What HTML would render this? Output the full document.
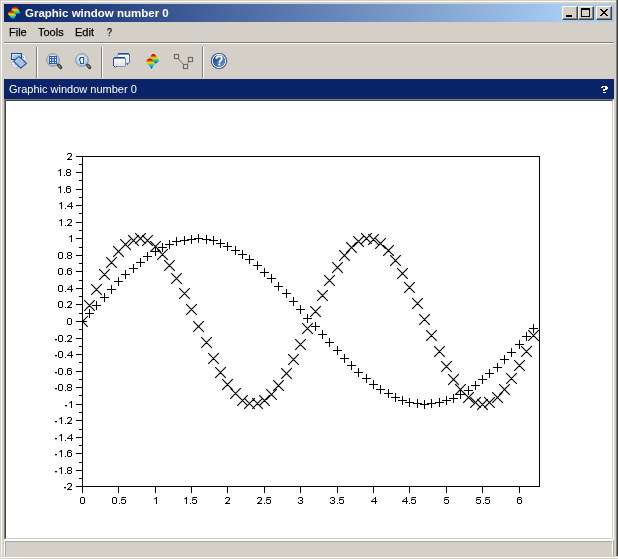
<!DOCTYPE html>
<html><head><meta charset="utf-8">
<style>
html,body{margin:0;padding:0;}
body{width:618px;height:559px;overflow:hidden;background:#d4d0c8;position:relative;font-family:"Liberation Sans",sans-serif;}
.a{position:absolute;}
.t{position:absolute;white-space:nowrap;font-size:11px;line-height:13px;color:#000;will-change:transform;}
.m{-webkit-text-stroke:0.25px #000;}
</style></head><body>
<!-- window frame -->
<div class="a" style="left:1px;top:1px;width:615px;height:1px;background:#fff"></div>
<div class="a" style="left:1px;top:1px;width:1px;height:555px;background:#fff"></div>
<div class="a" style="left:616px;top:0;width:1px;height:556px;background:#808080"></div>
<div class="a" style="left:617px;top:0;width:1px;height:556px;background:#404040"></div>
<div class="a" style="left:0;top:557px;width:618px;height:1px;background:#fff"></div>

<!-- title bar -->
<div class="a" style="left:4px;top:4px;width:610px;height:18px;background:linear-gradient(to right,#0a246a 0px,#a6caf0 556px)"></div>
<div class="t" style="left:25px;top:7px;font-weight:bold;color:#fff;font-size:11.5px">Graphic window number 0</div>

<!-- caption buttons -->
<div class="a" style="left:562px;top:6px;width:16px;height:14px;box-sizing:border-box;background:#d4d0c8;border-top:1px solid #fff;border-left:1px solid #fff;border-right:1px solid #404040;border-bottom:1px solid #404040;box-shadow:inset -1px -1px 0 #808080"></div>
<div class="a" style="left:566px;top:15px;width:6px;height:2px;background:#000"></div>
<div class="a" style="left:578px;top:6px;width:16px;height:14px;box-sizing:border-box;background:#d4d0c8;border-top:1px solid #fff;border-left:1px solid #fff;border-right:1px solid #404040;border-bottom:1px solid #404040;box-shadow:inset -1px -1px 0 #808080"></div>
<div class="a" style="left:581px;top:8px;width:9px;height:9px;box-sizing:border-box;border:1px solid #000;border-top-width:2px"></div>
<div class="a" style="left:596px;top:6px;width:16px;height:14px;box-sizing:border-box;background:#d4d0c8;border-top:1px solid #fff;border-left:1px solid #fff;border-right:1px solid #404040;border-bottom:1px solid #404040;box-shadow:inset -1px -1px 0 #808080"></div>
<svg class="a" style="left:0;top:0" width="618" height="24" shape-rendering="crispEdges"><path d="M600 9h1v1h-1zM601 9h1v1h-1zM606 9h1v1h-1zM607 9h1v1h-1zM601 10h1v1h-1zM602 10h1v1h-1zM605 10h1v1h-1zM606 10h1v1h-1zM602 11h1v1h-1zM603 11h1v1h-1zM604 11h1v1h-1zM605 11h1v1h-1zM603 12h1v1h-1zM604 12h1v1h-1zM602 13h1v1h-1zM603 13h1v1h-1zM604 13h1v1h-1zM605 13h1v1h-1zM601 14h1v1h-1zM602 14h1v1h-1zM605 14h1v1h-1zM606 14h1v1h-1zM600 15h1v1h-1zM601 15h1v1h-1zM606 15h1v1h-1zM607 15h1v1h-1z" fill="#000"/></svg>

<!-- menu bar -->
<div class="t" style="left:9px;top:26px" ><span class="m">File</span></div>
<div class="t" style="left:38px;top:26px" ><span class="m">Tools</span></div>
<div class="t" style="left:75px;top:26px" ><span class="m">Edit</span></div>
<div class="t" style="left:107px;top:26px;transform:scaleX(0.8);transform-origin:0 0"><span class="m">?</span></div>
<div class="a" style="left:4px;top:42px;width:610px;height:1px;background:#808080"></div>
<div class="a" style="left:4px;top:43px;width:610px;height:1px;background:#fff"></div>

<!-- toolbar separators -->
<div class="a" style="left:36px;top:47px;width:1px;height:31px;background:#808080"></div>
<div class="a" style="left:37px;top:47px;width:1px;height:31px;background:#fff"></div>
<div class="a" style="left:101px;top:47px;width:1px;height:31px;background:#808080"></div>
<div class="a" style="left:102px;top:47px;width:1px;height:31px;background:#fff"></div>
<div class="a" style="left:202px;top:47px;width:1px;height:31px;background:#808080"></div>
<div class="a" style="left:203px;top:47px;width:1px;height:31px;background:#fff"></div>


<!-- toolbar icons -->
<svg class="a" style="left:0;top:0" width="240" height="80" viewBox="0 0 240 80">
<defs>
<linearGradient id="lb" x1="0" y1="0" x2="1" y2="1"><stop offset="0" stop-color="#c4d8f2"/><stop offset="1" stop-color="#7ea4d8"/></linearGradient>
<linearGradient id="rb" x1="0" y1="0" x2="0" y2="1"><stop offset="0" stop-color="#a00000"/><stop offset="0.14" stop-color="#e01800"/><stop offset="0.28" stop-color="#ff7000"/><stop offset="0.4" stop-color="#f0e000"/><stop offset="0.52" stop-color="#80e030"/><stop offset="0.63" stop-color="#20d080"/><stop offset="0.74" stop-color="#00c0e0"/><stop offset="0.86" stop-color="#0058f0"/><stop offset="1" stop-color="#0000a0"/></linearGradient>
<radialGradient id="mg" cx="0.4" cy="0.35" r="0.7"><stop offset="0" stop-color="#e4f0fc"/><stop offset="1" stop-color="#98c0ec"/></radialGradient>
<linearGradient id="hb" x1="0" y1="0" x2="1" y2="1"><stop offset="0" stop-color="#0e3a8a"/><stop offset="1" stop-color="#6c9ad0"/></linearGradient>
<linearGradient id="bw" x1="0" y1="0" x2="0" y2="1"><stop offset="0" stop-color="#ffffff"/><stop offset="1" stop-color="#e2e2e6"/></linearGradient>
</defs>
<!-- rotate icon -->
<path d="M22 54.6c2.6 0 3.6 1.4 3.6 3.2h1.2l-2.2 2.6l-2.2-2.6h1.2c0-.9-.6-1.3-1.6-1.3z" fill="#ffffff" stroke="#9eb0c8" stroke-width=".8" stroke-linejoin="round"/>
<path d="M17.5 67.6c-3.2 0-5-1.2-5-3.4h-1.4l2.2-2.6l2.2 2.6h-1.2c0 .9.9 1.5 3.2 1.5z" fill="#ffffff" stroke="#9eb0c8" stroke-width=".8" stroke-linejoin="round"/>
<rect x="11.5" y="53.5" width="10" height="6" fill="url(#lb)" stroke="#1c4a9a" stroke-width="1"/><path d="M12.5 58.5V54.5H20" fill="none" stroke="#e8f0fa" stroke-width=".8"/>
<path d="M13.7 61.4L18.8 56.7L26.5 63.4L20.8 68.1Z" fill="#a8c2e8" stroke="#1c4a9a" stroke-width="1.05" stroke-linejoin="round"/><path d="M15 61.4L18.8 57.9L23 61.6" fill="none" stroke="#e4eefa" stroke-width=".7"/>
<!-- magnifier grid -->
<circle cx="53" cy="60" r="6.3" fill="url(#mg)" stroke="#8c8c8c" stroke-width="1"/>
<path d="M58.6 65.2L60.6 67.4" stroke="#3c3c3c" stroke-width="3.4" stroke-linecap="round"/><path d="M58.8 65.5L60.3 67.1" stroke="#8a8a8a" stroke-width="1.2" stroke-linecap="round"/>
<rect x="49" y="56" width="8" height="8" fill="#2c5ca8"/>
<path d="M50 57h1v1h-1zM52 57h2v1h-2zM55 57h1v1h-1zM50 59h1v2h-1zM55 59h1v2h-1zM50 62h1v1h-1zM52 62h2v1h-2zM55 62h1v1h-1z" fill="#fff"/>
<rect x="52" y="59" width="2" height="2" fill="#9cc0ec"/>
<!-- magnifier 1 -->
<circle cx="82" cy="60" r="6.3" fill="url(#mg)" stroke="#8c8c8c" stroke-width="1"/>
<path d="M87.6 65.2L89.6 67.4" stroke="#3c3c3c" stroke-width="3.4" stroke-linecap="round"/><path d="M87.8 65.5L89.3 67.1" stroke="#8a8a8a" stroke-width="1.2" stroke-linecap="round"/>
<path d="M80 57H84V64H80V61H79V58H80Z" fill="#2c5ca8"/>
<path d="M81 58H83V63H81V60.5H80V59.2H81Z" fill="#fff"/>
<!-- speech bubbles -->
<g shape-rendering="crispEdges">
<rect x="118" y="54" width="11" height="9" fill="url(#bw)"/>
<rect x="118" y="53" width="11" height="1" fill="#1c4c9c"/><rect x="118" y="54" width="11" height="1" fill="#6a8cc8"/>
<rect x="117" y="54" width="1" height="9" fill="#9aaed2"/>
<rect x="129" y="54" width="1" height="9" fill="#4a72b4"/>
<rect x="126" y="63" width="3" height="1" fill="#6a8cc4"/>
<rect x="127" y="63" width="1" height="2" fill="#3a64ac"/>
<rect x="114" y="58" width="11" height="8" fill="url(#bw)"/>
<rect x="114" y="57" width="11" height="1" fill="#1c4c9c"/><rect x="114" y="58" width="11" height="1" fill="#6a8cc8"/>
<rect x="113" y="58" width="1" height="8" fill="#1c4c9c"/>
<rect x="125" y="58" width="1" height="8" fill="#7090c4"/>
<rect x="117" y="66" width="8" height="1" fill="#7c98c8"/>
<rect x="114" y="66" width="1" height="1" fill="#1c4c9c"/>
<rect x="116" y="66" width="1" height="1" fill="#1c4c9c"/>
<rect x="115" y="67" width="1" height="1" fill="#5a7cbc"/>
</g>
<!-- scilab toolbar icon -->
<use href="#sci" transform="translate(137.7 47.4) scale(1.065)"/>
<!-- polyline icon -->
<path d="M178.5 59L183.5 64.5M187.5 63.5L189 61.5" stroke="#707070" stroke-width="1"/>
<rect x="174.5" y="54.5" width="4" height="4" fill="#e0dcd4" stroke="#6c6c6c" stroke-width="1.2"/>
<rect x="183.5" y="64.5" width="4" height="4" fill="#e0dcd4" stroke="#6c6c6c" stroke-width="1.2"/>
<rect x="188.5" y="57.5" width="4" height="4" fill="#e0dcd4" stroke="#6c6c6c" stroke-width="1.2"/>
<!-- help icon -->
<circle cx="219" cy="61" r="8.1" fill="#1a4a98"/>
<circle cx="219" cy="61" r="6.6" fill="none" stroke="#fff" stroke-width="1.1"/>
<circle cx="219" cy="61" r="5.9" fill="url(#hb)"/>
<path d="M216.4 58.9c0-1.8 1.2-2.7 2.7-2.7c1.7 0 2.7 1.1 2.7 2.4c0 1.9-2.3 2.1-2.3 3.8v.4" fill="none" stroke="#fff" stroke-width="2"/>
<rect x="218.3" y="63.5" width="2.1" height="2" fill="#fff"/>
</svg>
<!-- title bar icon -->
<svg class="a" style="left:0;top:0" width="30" height="24" viewBox="0 0 30 24">
<g id="sci">
<path d="M11.4 10.6C11.8 8 13.2 6.3 14.8 6.3C16.3 6.3 17.5 8 20.3 12.8L16.8 15.2C14.8 13.8 13 12.2 11.4 10.6Z" fill="url(#rb)"/>
<path d="M7.9 13.8C8.3 11.6 9.8 10.5 11.2 10.5C12.8 10.5 14 11.6 16.1 15.3L13.1 20C11 17.8 9 15.5 7.9 13.8Z" fill="url(#rb)"/>
</g>
</svg>

<!-- header bar -->
<div class="a" style="left:4px;top:79px;width:610px;height:20px;background:#0a246a"></div>
<div class="t" style="left:9px;top:83px;color:#fff">Graphic window number 0</div>
<svg class="a" style="left:0;top:0" width="618" height="100" shape-rendering="crispEdges"><path d="M602 86h5v1h-5zM601 87h2v1h-2zM605 87h3v2h-3zM603 89h4v1h-4zM603 90h2v1h-2zM603 92h3v1h-3z" fill="#fff"/></svg>

<!-- canvas sunken border -->
<div class="a" style="left:4px;top:99px;width:610px;height:441px;box-sizing:border-box;border-top:1px solid #808080;border-left:1px solid #808080;border-right:1px solid #fff;border-bottom:1px solid #fff;"></div>
<div class="a" style="left:5px;top:100px;width:608px;height:439px;box-sizing:border-box;background:#fff;border-top:1px solid #404040;border-left:1px solid #404040;border-right:1px solid #d4d0c8;border-bottom:1px solid #d4d0c8;"></div>

<!-- status bar -->
<div class="a" style="left:4px;top:540px;width:610px;height:1px;background:#fff"></div>
<div class="a" style="left:4px;top:539px;width:1px;height:17px;background:#fff"></div>
<div class="a" style="left:5px;top:541px;width:607px;height:1px;background:#a8a8a8"></div>
<div class="a" style="left:5px;top:541px;width:1px;height:15px;background:#a8a8a8"></div>
<div class="a" style="left:612px;top:541px;width:1px;height:15px;background:#fff"></div>
<div class="a" style="left:613px;top:540px;width:1px;height:16px;background:#a8a8a8"></div>

<svg class="a" style="left:0;top:0;will-change:transform" width="618" height="559" shape-rendering="crispEdges">
<path d="M82.5 156.5H539.5V486.5H82.5Z" fill="none" stroke="#000" stroke-width="1"/>
<path d="M76 486.5H82 M79 478.5H82 M76 470.5H82 M79 462.5H82 M76 453.5H82 M79 445.5H82 M76 437.5H82 M79 429.5H82 M76 420.5H82 M79 412.5H82 M76 404.5H82 M79 395.5H82 M76 387.5H82 M79 379.5H82 M76 371.5H82 M79 362.5H82 M76 354.5H82 M79 346.5H82 M76 338.5H82 M79 329.5H82 M76 321.5H82 M79 313.5H82 M76 304.5H82 M79 296.5H82 M76 288.5H82 M79 280.5H82 M76 271.5H82 M79 263.5H82 M76 255.5H82 M79 247.5H82 M76 238.5H82 M79 230.5H82 M76 222.5H82 M79 213.5H82 M76 205.5H82 M79 197.5H82 M76 189.5H82 M79 180.5H82 M76 172.5H82 M79 164.5H82 M76 156.5H82 M82.5 487V493 M118.5 487V493 M155.5 487V493 M191.5 487V493 M227.5 487V493 M264.5 487V493 M300.5 487V493 M337.5 487V493 M373.5 487V493 M409.5 487V493 M446.5 487V493 M482.5 487V493 M519.5 487V493" stroke="#000" stroke-width="1"/>
<g fill="#000" shape-rendering="crispEdges"><path d="M67 483h1v1h-1zM60 467h1v1h-1zM59 469h1v1h-1zM67 467h1v1h-1zM71 467h1v1h-1zM67 470h1v1h-1zM71 470h1v1h-1zM67 473h1v1h-1zM71 473h1v1h-1zM60 450h1v1h-1zM59 452h1v1h-1zM67 450h1v1h-1zM71 450h1v1h-1zM68 451h1v1h-1zM71 452h1v1h-1zM67 456h1v1h-1zM71 456h1v1h-1zM60 434h1v1h-1zM59 436h1v1h-1zM69 435h1v1h-1zM68 436h1v1h-1zM67 437h1v1h-1zM60 417h1v1h-1zM59 419h1v1h-1zM67 417h1v1h-1zM70 401h1v1h-1zM69 403h1v1h-1zM58 384h1v1h-1zM62 384h1v1h-1zM58 390h1v1h-1zM62 390h1v1h-1zM67 384h1v1h-1zM71 384h1v1h-1zM67 387h1v1h-1zM71 387h1v1h-1zM67 390h1v1h-1zM71 390h1v1h-1zM58 368h1v1h-1zM62 368h1v1h-1zM58 374h1v1h-1zM62 374h1v1h-1zM67 368h1v1h-1zM71 368h1v1h-1zM68 369h1v1h-1zM71 370h1v1h-1zM67 374h1v1h-1zM71 374h1v1h-1zM58 351h1v1h-1zM62 351h1v1h-1zM58 357h1v1h-1zM62 357h1v1h-1zM69 352h1v1h-1zM68 353h1v1h-1zM67 354h1v1h-1zM58 335h1v1h-1zM62 335h1v1h-1zM58 341h1v1h-1zM62 341h1v1h-1zM67 335h1v1h-1zM67 318h1v1h-1zM71 318h1v1h-1zM67 324h1v1h-1zM71 324h1v1h-1zM58 301h1v1h-1zM62 301h1v1h-1zM58 307h1v1h-1zM62 307h1v1h-1zM67 301h1v1h-1zM58 285h1v1h-1zM62 285h1v1h-1zM58 291h1v1h-1zM62 291h1v1h-1zM69 286h1v1h-1zM68 287h1v1h-1zM67 288h1v1h-1zM58 268h1v1h-1zM62 268h1v1h-1zM58 274h1v1h-1zM62 274h1v1h-1zM67 268h1v1h-1zM71 268h1v1h-1zM68 269h1v1h-1zM71 270h1v1h-1zM67 274h1v1h-1zM71 274h1v1h-1zM58 252h1v1h-1zM62 252h1v1h-1zM58 258h1v1h-1zM62 258h1v1h-1zM67 252h1v1h-1zM71 252h1v1h-1zM67 255h1v1h-1zM71 255h1v1h-1zM67 258h1v1h-1zM71 258h1v1h-1zM70 235h1v1h-1zM69 237h1v1h-1zM60 219h1v1h-1zM59 221h1v1h-1zM67 219h1v1h-1zM60 202h1v1h-1zM59 204h1v1h-1zM69 203h1v1h-1zM68 204h1v1h-1zM67 205h1v1h-1zM59 186h1v1h-1zM58 188h1v1h-1zM66 186h1v1h-1zM70 186h1v1h-1zM67 187h1v1h-1zM70 188h1v1h-1zM66 192h1v1h-1zM70 192h1v1h-1zM59 169h1v1h-1zM58 171h1v1h-1zM66 169h1v1h-1zM70 169h1v1h-1zM66 172h1v1h-1zM70 172h1v1h-1zM66 175h1v1h-1zM70 175h1v1h-1zM67 153h1v1h-1zM80 497h1v1h-1zM84 497h1v1h-1zM80 503h1v1h-1zM84 503h1v1h-1zM112 497h1v1h-1zM116 497h1v1h-1zM112 503h1v1h-1zM116 503h1v1h-1zM122 498h1v1h-1zM125 499h1v1h-1zM121 503h1v1h-1zM125 503h1v1h-1zM155 497h1v1h-1zM154 499h1v1h-1zM185 497h1v1h-1zM184 499h1v1h-1zM193 498h1v1h-1zM196 499h1v1h-1zM192 503h1v1h-1zM196 503h1v1h-1zM225 497h1v1h-1zM257 497h1v1h-1zM267 498h1v1h-1zM270 499h1v1h-1zM266 503h1v1h-1zM270 503h1v1h-1zM298 497h1v1h-1zM302 497h1v1h-1zM298 503h1v1h-1zM302 503h1v1h-1zM330 497h1v1h-1zM334 497h1v1h-1zM330 503h1v1h-1zM334 503h1v1h-1zM340 498h1v1h-1zM343 499h1v1h-1zM339 503h1v1h-1zM343 503h1v1h-1zM373 498h1v1h-1zM372 499h1v1h-1zM371 500h1v1h-1zM404 498h1v1h-1zM403 499h1v1h-1zM402 500h1v1h-1zM412 498h1v1h-1zM415 499h1v1h-1zM411 503h1v1h-1zM415 503h1v1h-1zM445 498h1v1h-1zM448 499h1v1h-1zM444 503h1v1h-1zM448 503h1v1h-1zM477 498h1v1h-1zM480 499h1v1h-1zM476 503h1v1h-1zM480 503h1v1h-1zM486 498h1v1h-1zM489 499h1v1h-1zM485 503h1v1h-1zM489 503h1v1h-1zM517 497h1v1h-1zM521 497h1v1h-1zM518 498h1v1h-1zM521 499h1v1h-1zM517 503h1v1h-1zM521 503h1v1h-1z" fill-opacity=".22"/><path d="M64 488h1v1h-1zM65 488h1v1h-1zM71 483h1v1h-1zM70 485h1v1h-1zM71 486h1v1h-1zM70 487h1v1h-1zM55 472h1v1h-1zM56 472h1v1h-1zM55 455h1v1h-1zM56 455h1v1h-1zM55 439h1v1h-1zM56 439h1v1h-1zM55 422h1v1h-1zM56 422h1v1h-1zM71 417h1v1h-1zM70 419h1v1h-1zM71 420h1v1h-1zM70 421h1v1h-1zM65 406h1v1h-1zM66 406h1v1h-1zM55 389h1v1h-1zM56 389h1v1h-1zM55 373h1v1h-1zM56 373h1v1h-1zM55 356h1v1h-1zM56 356h1v1h-1zM55 340h1v1h-1zM56 340h1v1h-1zM71 335h1v1h-1zM70 337h1v1h-1zM71 338h1v1h-1zM70 339h1v1h-1zM71 301h1v1h-1zM70 303h1v1h-1zM71 304h1v1h-1zM70 305h1v1h-1zM71 219h1v1h-1zM70 221h1v1h-1zM71 222h1v1h-1zM70 223h1v1h-1zM71 153h1v1h-1zM70 155h1v1h-1zM71 156h1v1h-1zM70 157h1v1h-1zM229 497h1v1h-1zM228 499h1v1h-1zM229 500h1v1h-1zM228 501h1v1h-1zM261 497h1v1h-1zM260 499h1v1h-1zM261 500h1v1h-1zM260 501h1v1h-1zM302 500h1v1h-1zM334 500h1v1h-1z" fill-opacity=".33"/><path d="M69 488h1v1h-1zM69 422h1v1h-1zM69 340h1v1h-1zM69 306h1v1h-1zM69 224h1v1h-1zM69 158h1v1h-1zM121 497h1v1h-1zM192 497h1v1h-1zM227 502h1v1h-1zM259 502h1v1h-1zM266 497h1v1h-1zM339 497h1v1h-1zM411 497h1v1h-1zM444 497h1v1h-1zM476 497h1v1h-1zM485 497h1v1h-1z" fill-opacity=".44"/><path d="M59 468h1v1h-1zM59 451h1v1h-1zM68 452h1v1h-1zM59 435h1v1h-1zM59 418h1v1h-1zM69 402h1v1h-1zM68 370h1v1h-1zM68 270h1v1h-1zM69 236h1v1h-1zM59 220h1v1h-1zM59 203h1v1h-1zM58 187h1v1h-1zM67 188h1v1h-1zM58 170h1v1h-1zM121 498h1v1h-1zM154 498h1v1h-1zM184 498h1v1h-1zM192 498h1v1h-1zM266 498h1v1h-1zM339 498h1v1h-1zM411 498h1v1h-1zM444 498h1v1h-1zM476 498h1v1h-1zM485 498h1v1h-1zM518 499h1v1h-1z" fill-opacity=".55"/><path d="M70 435h1v1h-1zM69 436h1v1h-1zM68 437h1v1h-1zM70 352h1v1h-1zM69 353h1v1h-1zM68 354h1v1h-1zM70 286h1v1h-1zM69 287h1v1h-1zM68 288h1v1h-1zM70 203h1v1h-1zM69 204h1v1h-1zM68 205h1v1h-1zM121 499h1v1h-1zM192 499h1v1h-1zM266 499h1v1h-1zM339 499h1v1h-1zM374 498h1v1h-1zM373 499h1v1h-1zM372 500h1v1h-1zM405 498h1v1h-1zM404 499h1v1h-1zM403 500h1v1h-1zM411 499h1v1h-1zM444 499h1v1h-1zM476 499h1v1h-1zM485 499h1v1h-1z" fill-opacity=".66"/><path d="M70 486h1v1h-1zM69 487h1v1h-1zM70 420h1v1h-1zM69 421h1v1h-1zM70 338h1v1h-1zM69 339h1v1h-1zM70 304h1v1h-1zM69 305h1v1h-1zM70 222h1v1h-1zM69 223h1v1h-1zM70 156h1v1h-1zM69 157h1v1h-1zM228 500h1v1h-1zM227 501h1v1h-1zM260 500h1v1h-1zM259 501h1v1h-1z" fill-opacity=".77"/><path d="M60 468h1v1h-1zM60 451h1v1h-1zM71 451h1v1h-1zM60 435h1v1h-1zM60 418h1v1h-1zM70 402h1v1h-1zM71 369h1v1h-1zM71 269h1v1h-1zM70 236h1v1h-1zM60 220h1v1h-1zM60 203h1v1h-1zM59 187h1v1h-1zM70 187h1v1h-1zM59 170h1v1h-1zM122 499h1v1h-1zM124 499h1v1h-1zM125 500h1v1h-1zM155 498h1v1h-1zM185 498h1v1h-1zM193 499h1v1h-1zM195 499h1v1h-1zM196 500h1v1h-1zM267 499h1v1h-1zM269 499h1v1h-1zM270 500h1v1h-1zM340 499h1v1h-1zM342 499h1v1h-1zM343 500h1v1h-1zM412 499h1v1h-1zM414 499h1v1h-1zM415 500h1v1h-1zM445 499h1v1h-1zM447 499h1v1h-1zM448 500h1v1h-1zM477 499h1v1h-1zM479 499h1v1h-1zM480 500h1v1h-1zM486 499h1v1h-1zM488 499h1v1h-1zM489 500h1v1h-1zM521 498h1v1h-1z" fill-opacity=".88"/><path d="M64 487h1v1h-1zM65 487h1v1h-1zM68 483h1v1h-1zM69 483h1v1h-1zM70 483h1v1h-1zM67 484h1v1h-1zM71 484h1v1h-1zM71 485h1v1h-1zM68 488h1v1h-1zM67 489h1v1h-1zM68 489h1v1h-1zM69 489h1v1h-1zM70 489h1v1h-1zM71 489h1v1h-1zM55 471h1v1h-1zM56 471h1v1h-1zM61 467h1v1h-1zM61 468h1v1h-1zM61 469h1v1h-1zM61 470h1v1h-1zM61 471h1v1h-1zM61 472h1v1h-1zM61 473h1v1h-1zM65 473h1v1h-1zM68 467h1v1h-1zM69 467h1v1h-1zM70 467h1v1h-1zM67 468h1v1h-1zM71 468h1v1h-1zM67 469h1v1h-1zM71 469h1v1h-1zM68 470h1v1h-1zM69 470h1v1h-1zM70 470h1v1h-1zM67 471h1v1h-1zM71 471h1v1h-1zM67 472h1v1h-1zM71 472h1v1h-1zM68 473h1v1h-1zM69 473h1v1h-1zM70 473h1v1h-1zM55 454h1v1h-1zM56 454h1v1h-1zM61 450h1v1h-1zM61 451h1v1h-1zM61 452h1v1h-1zM61 453h1v1h-1zM61 454h1v1h-1zM61 455h1v1h-1zM61 456h1v1h-1zM65 456h1v1h-1zM68 450h1v1h-1zM69 450h1v1h-1zM70 450h1v1h-1zM67 451h1v1h-1zM67 452h1v1h-1zM69 452h1v1h-1zM70 452h1v1h-1zM67 453h1v1h-1zM71 453h1v1h-1zM67 454h1v1h-1zM71 454h1v1h-1zM67 455h1v1h-1zM71 455h1v1h-1zM68 456h1v1h-1zM69 456h1v1h-1zM70 456h1v1h-1zM55 438h1v1h-1zM56 438h1v1h-1zM61 434h1v1h-1zM61 435h1v1h-1zM61 436h1v1h-1zM61 437h1v1h-1zM61 438h1v1h-1zM61 439h1v1h-1zM61 440h1v1h-1zM65 440h1v1h-1zM71 434h1v1h-1zM71 435h1v1h-1zM71 436h1v1h-1zM71 437h1v1h-1zM67 438h1v1h-1zM68 438h1v1h-1zM69 438h1v1h-1zM70 438h1v1h-1zM71 438h1v1h-1zM72 438h1v1h-1zM71 439h1v1h-1zM71 440h1v1h-1zM55 421h1v1h-1zM56 421h1v1h-1zM61 417h1v1h-1zM61 418h1v1h-1zM61 419h1v1h-1zM61 420h1v1h-1zM61 421h1v1h-1zM61 422h1v1h-1zM61 423h1v1h-1zM65 423h1v1h-1zM68 417h1v1h-1zM69 417h1v1h-1zM70 417h1v1h-1zM67 418h1v1h-1zM71 418h1v1h-1zM71 419h1v1h-1zM68 422h1v1h-1zM67 423h1v1h-1zM68 423h1v1h-1zM69 423h1v1h-1zM70 423h1v1h-1zM71 423h1v1h-1zM65 405h1v1h-1zM66 405h1v1h-1zM71 401h1v1h-1zM71 402h1v1h-1zM71 403h1v1h-1zM71 404h1v1h-1zM71 405h1v1h-1zM71 406h1v1h-1zM71 407h1v1h-1zM55 388h1v1h-1zM56 388h1v1h-1zM59 384h1v1h-1zM60 384h1v1h-1zM61 384h1v1h-1zM58 385h1v1h-1zM62 385h1v1h-1zM58 386h1v1h-1zM62 386h1v1h-1zM58 387h1v1h-1zM62 387h1v1h-1zM58 388h1v1h-1zM62 388h1v1h-1zM58 389h1v1h-1zM62 389h1v1h-1zM59 390h1v1h-1zM60 390h1v1h-1zM61 390h1v1h-1zM65 390h1v1h-1zM68 384h1v1h-1zM69 384h1v1h-1zM70 384h1v1h-1zM67 385h1v1h-1zM71 385h1v1h-1zM67 386h1v1h-1zM71 386h1v1h-1zM68 387h1v1h-1zM69 387h1v1h-1zM70 387h1v1h-1zM67 388h1v1h-1zM71 388h1v1h-1zM67 389h1v1h-1zM71 389h1v1h-1zM68 390h1v1h-1zM69 390h1v1h-1zM70 390h1v1h-1zM55 372h1v1h-1zM56 372h1v1h-1zM59 368h1v1h-1zM60 368h1v1h-1zM61 368h1v1h-1zM58 369h1v1h-1zM62 369h1v1h-1zM58 370h1v1h-1zM62 370h1v1h-1zM58 371h1v1h-1zM62 371h1v1h-1zM58 372h1v1h-1zM62 372h1v1h-1zM58 373h1v1h-1zM62 373h1v1h-1zM59 374h1v1h-1zM60 374h1v1h-1zM61 374h1v1h-1zM65 374h1v1h-1zM68 368h1v1h-1zM69 368h1v1h-1zM70 368h1v1h-1zM67 369h1v1h-1zM67 370h1v1h-1zM69 370h1v1h-1zM70 370h1v1h-1zM67 371h1v1h-1zM71 371h1v1h-1zM67 372h1v1h-1zM71 372h1v1h-1zM67 373h1v1h-1zM71 373h1v1h-1zM68 374h1v1h-1zM69 374h1v1h-1zM70 374h1v1h-1zM55 355h1v1h-1zM56 355h1v1h-1zM59 351h1v1h-1zM60 351h1v1h-1zM61 351h1v1h-1zM58 352h1v1h-1zM62 352h1v1h-1zM58 353h1v1h-1zM62 353h1v1h-1zM58 354h1v1h-1zM62 354h1v1h-1zM58 355h1v1h-1zM62 355h1v1h-1zM58 356h1v1h-1zM62 356h1v1h-1zM59 357h1v1h-1zM60 357h1v1h-1zM61 357h1v1h-1zM65 357h1v1h-1zM71 351h1v1h-1zM71 352h1v1h-1zM71 353h1v1h-1zM71 354h1v1h-1zM67 355h1v1h-1zM68 355h1v1h-1zM69 355h1v1h-1zM70 355h1v1h-1zM71 355h1v1h-1zM72 355h1v1h-1zM71 356h1v1h-1zM71 357h1v1h-1zM55 339h1v1h-1zM56 339h1v1h-1zM59 335h1v1h-1zM60 335h1v1h-1zM61 335h1v1h-1zM58 336h1v1h-1zM62 336h1v1h-1zM58 337h1v1h-1zM62 337h1v1h-1zM58 338h1v1h-1zM62 338h1v1h-1zM58 339h1v1h-1zM62 339h1v1h-1zM58 340h1v1h-1zM62 340h1v1h-1zM59 341h1v1h-1zM60 341h1v1h-1zM61 341h1v1h-1zM65 341h1v1h-1zM68 335h1v1h-1zM69 335h1v1h-1zM70 335h1v1h-1zM67 336h1v1h-1zM71 336h1v1h-1zM71 337h1v1h-1zM68 340h1v1h-1zM67 341h1v1h-1zM68 341h1v1h-1zM69 341h1v1h-1zM70 341h1v1h-1zM71 341h1v1h-1zM68 318h1v1h-1zM69 318h1v1h-1zM70 318h1v1h-1zM67 319h1v1h-1zM71 319h1v1h-1zM67 320h1v1h-1zM71 320h1v1h-1zM67 321h1v1h-1zM71 321h1v1h-1zM67 322h1v1h-1zM71 322h1v1h-1zM67 323h1v1h-1zM71 323h1v1h-1zM68 324h1v1h-1zM69 324h1v1h-1zM70 324h1v1h-1zM59 301h1v1h-1zM60 301h1v1h-1zM61 301h1v1h-1zM58 302h1v1h-1zM62 302h1v1h-1zM58 303h1v1h-1zM62 303h1v1h-1zM58 304h1v1h-1zM62 304h1v1h-1zM58 305h1v1h-1zM62 305h1v1h-1zM58 306h1v1h-1zM62 306h1v1h-1zM59 307h1v1h-1zM60 307h1v1h-1zM61 307h1v1h-1zM65 307h1v1h-1zM68 301h1v1h-1zM69 301h1v1h-1zM70 301h1v1h-1zM67 302h1v1h-1zM71 302h1v1h-1zM71 303h1v1h-1zM68 306h1v1h-1zM67 307h1v1h-1zM68 307h1v1h-1zM69 307h1v1h-1zM70 307h1v1h-1zM71 307h1v1h-1zM59 285h1v1h-1zM60 285h1v1h-1zM61 285h1v1h-1zM58 286h1v1h-1zM62 286h1v1h-1zM58 287h1v1h-1zM62 287h1v1h-1zM58 288h1v1h-1zM62 288h1v1h-1zM58 289h1v1h-1zM62 289h1v1h-1zM58 290h1v1h-1zM62 290h1v1h-1zM59 291h1v1h-1zM60 291h1v1h-1zM61 291h1v1h-1zM65 291h1v1h-1zM71 285h1v1h-1zM71 286h1v1h-1zM71 287h1v1h-1zM71 288h1v1h-1zM67 289h1v1h-1zM68 289h1v1h-1zM69 289h1v1h-1zM70 289h1v1h-1zM71 289h1v1h-1zM72 289h1v1h-1zM71 290h1v1h-1zM71 291h1v1h-1zM59 268h1v1h-1zM60 268h1v1h-1zM61 268h1v1h-1zM58 269h1v1h-1zM62 269h1v1h-1zM58 270h1v1h-1zM62 270h1v1h-1zM58 271h1v1h-1zM62 271h1v1h-1zM58 272h1v1h-1zM62 272h1v1h-1zM58 273h1v1h-1zM62 273h1v1h-1zM59 274h1v1h-1zM60 274h1v1h-1zM61 274h1v1h-1zM65 274h1v1h-1zM68 268h1v1h-1zM69 268h1v1h-1zM70 268h1v1h-1zM67 269h1v1h-1zM67 270h1v1h-1zM69 270h1v1h-1zM70 270h1v1h-1zM67 271h1v1h-1zM71 271h1v1h-1zM67 272h1v1h-1zM71 272h1v1h-1zM67 273h1v1h-1zM71 273h1v1h-1zM68 274h1v1h-1zM69 274h1v1h-1zM70 274h1v1h-1zM59 252h1v1h-1zM60 252h1v1h-1zM61 252h1v1h-1zM58 253h1v1h-1zM62 253h1v1h-1zM58 254h1v1h-1zM62 254h1v1h-1zM58 255h1v1h-1zM62 255h1v1h-1zM58 256h1v1h-1zM62 256h1v1h-1zM58 257h1v1h-1zM62 257h1v1h-1zM59 258h1v1h-1zM60 258h1v1h-1zM61 258h1v1h-1zM65 258h1v1h-1zM68 252h1v1h-1zM69 252h1v1h-1zM70 252h1v1h-1zM67 253h1v1h-1zM71 253h1v1h-1zM67 254h1v1h-1zM71 254h1v1h-1zM68 255h1v1h-1zM69 255h1v1h-1zM70 255h1v1h-1zM67 256h1v1h-1zM71 256h1v1h-1zM67 257h1v1h-1zM71 257h1v1h-1zM68 258h1v1h-1zM69 258h1v1h-1zM70 258h1v1h-1zM71 235h1v1h-1zM71 236h1v1h-1zM71 237h1v1h-1zM71 238h1v1h-1zM71 239h1v1h-1zM71 240h1v1h-1zM71 241h1v1h-1zM61 219h1v1h-1zM61 220h1v1h-1zM61 221h1v1h-1zM61 222h1v1h-1zM61 223h1v1h-1zM61 224h1v1h-1zM61 225h1v1h-1zM65 225h1v1h-1zM68 219h1v1h-1zM69 219h1v1h-1zM70 219h1v1h-1zM67 220h1v1h-1zM71 220h1v1h-1zM71 221h1v1h-1zM68 224h1v1h-1zM67 225h1v1h-1zM68 225h1v1h-1zM69 225h1v1h-1zM70 225h1v1h-1zM71 225h1v1h-1zM61 202h1v1h-1zM61 203h1v1h-1zM61 204h1v1h-1zM61 205h1v1h-1zM61 206h1v1h-1zM61 207h1v1h-1zM61 208h1v1h-1zM65 208h1v1h-1zM71 202h1v1h-1zM71 203h1v1h-1zM71 204h1v1h-1zM71 205h1v1h-1zM67 206h1v1h-1zM68 206h1v1h-1zM69 206h1v1h-1zM70 206h1v1h-1zM71 206h1v1h-1zM72 206h1v1h-1zM71 207h1v1h-1zM71 208h1v1h-1zM60 186h1v1h-1zM60 187h1v1h-1zM60 188h1v1h-1zM60 189h1v1h-1zM60 190h1v1h-1zM60 191h1v1h-1zM60 192h1v1h-1zM64 192h1v1h-1zM67 186h1v1h-1zM68 186h1v1h-1zM69 186h1v1h-1zM66 187h1v1h-1zM66 188h1v1h-1zM68 188h1v1h-1zM69 188h1v1h-1zM66 189h1v1h-1zM70 189h1v1h-1zM66 190h1v1h-1zM70 190h1v1h-1zM66 191h1v1h-1zM70 191h1v1h-1zM67 192h1v1h-1zM68 192h1v1h-1zM69 192h1v1h-1zM60 169h1v1h-1zM60 170h1v1h-1zM60 171h1v1h-1zM60 172h1v1h-1zM60 173h1v1h-1zM60 174h1v1h-1zM60 175h1v1h-1zM64 175h1v1h-1zM67 169h1v1h-1zM68 169h1v1h-1zM69 169h1v1h-1zM66 170h1v1h-1zM70 170h1v1h-1zM66 171h1v1h-1zM70 171h1v1h-1zM67 172h1v1h-1zM68 172h1v1h-1zM69 172h1v1h-1zM66 173h1v1h-1zM70 173h1v1h-1zM66 174h1v1h-1zM70 174h1v1h-1zM67 175h1v1h-1zM68 175h1v1h-1zM69 175h1v1h-1zM68 153h1v1h-1zM69 153h1v1h-1zM70 153h1v1h-1zM67 154h1v1h-1zM71 154h1v1h-1zM71 155h1v1h-1zM68 158h1v1h-1zM67 159h1v1h-1zM68 159h1v1h-1zM69 159h1v1h-1zM70 159h1v1h-1zM71 159h1v1h-1zM81 497h1v1h-1zM82 497h1v1h-1zM83 497h1v1h-1zM80 498h1v1h-1zM84 498h1v1h-1zM80 499h1v1h-1zM84 499h1v1h-1zM80 500h1v1h-1zM84 500h1v1h-1zM80 501h1v1h-1zM84 501h1v1h-1zM80 502h1v1h-1zM84 502h1v1h-1zM81 503h1v1h-1zM82 503h1v1h-1zM83 503h1v1h-1zM113 497h1v1h-1zM114 497h1v1h-1zM115 497h1v1h-1zM112 498h1v1h-1zM116 498h1v1h-1zM112 499h1v1h-1zM116 499h1v1h-1zM112 500h1v1h-1zM116 500h1v1h-1zM112 501h1v1h-1zM116 501h1v1h-1zM112 502h1v1h-1zM116 502h1v1h-1zM113 503h1v1h-1zM114 503h1v1h-1zM115 503h1v1h-1zM119 503h1v1h-1zM122 497h1v1h-1zM123 497h1v1h-1zM124 497h1v1h-1zM125 497h1v1h-1zM123 499h1v1h-1zM121 500h1v1h-1zM125 501h1v1h-1zM121 502h1v1h-1zM125 502h1v1h-1zM122 503h1v1h-1zM123 503h1v1h-1zM124 503h1v1h-1zM156 497h1v1h-1zM156 498h1v1h-1zM156 499h1v1h-1zM156 500h1v1h-1zM156 501h1v1h-1zM156 502h1v1h-1zM156 503h1v1h-1zM186 497h1v1h-1zM186 498h1v1h-1zM186 499h1v1h-1zM186 500h1v1h-1zM186 501h1v1h-1zM186 502h1v1h-1zM186 503h1v1h-1zM190 503h1v1h-1zM193 497h1v1h-1zM194 497h1v1h-1zM195 497h1v1h-1zM196 497h1v1h-1zM194 499h1v1h-1zM192 500h1v1h-1zM196 501h1v1h-1zM192 502h1v1h-1zM196 502h1v1h-1zM193 503h1v1h-1zM194 503h1v1h-1zM195 503h1v1h-1zM226 497h1v1h-1zM227 497h1v1h-1zM228 497h1v1h-1zM225 498h1v1h-1zM229 498h1v1h-1zM229 499h1v1h-1zM226 502h1v1h-1zM225 503h1v1h-1zM226 503h1v1h-1zM227 503h1v1h-1zM228 503h1v1h-1zM229 503h1v1h-1zM258 497h1v1h-1zM259 497h1v1h-1zM260 497h1v1h-1zM257 498h1v1h-1zM261 498h1v1h-1zM261 499h1v1h-1zM258 502h1v1h-1zM257 503h1v1h-1zM258 503h1v1h-1zM259 503h1v1h-1zM260 503h1v1h-1zM261 503h1v1h-1zM264 503h1v1h-1zM267 497h1v1h-1zM268 497h1v1h-1zM269 497h1v1h-1zM270 497h1v1h-1zM268 499h1v1h-1zM266 500h1v1h-1zM270 501h1v1h-1zM266 502h1v1h-1zM270 502h1v1h-1zM267 503h1v1h-1zM268 503h1v1h-1zM269 503h1v1h-1zM299 497h1v1h-1zM300 497h1v1h-1zM301 497h1v1h-1zM298 498h1v1h-1zM302 498h1v1h-1zM302 499h1v1h-1zM300 500h1v1h-1zM301 500h1v1h-1zM302 501h1v1h-1zM298 502h1v1h-1zM302 502h1v1h-1zM299 503h1v1h-1zM300 503h1v1h-1zM301 503h1v1h-1zM331 497h1v1h-1zM332 497h1v1h-1zM333 497h1v1h-1zM330 498h1v1h-1zM334 498h1v1h-1zM334 499h1v1h-1zM332 500h1v1h-1zM333 500h1v1h-1zM334 501h1v1h-1zM330 502h1v1h-1zM334 502h1v1h-1zM331 503h1v1h-1zM332 503h1v1h-1zM333 503h1v1h-1zM337 503h1v1h-1zM340 497h1v1h-1zM341 497h1v1h-1zM342 497h1v1h-1zM343 497h1v1h-1zM341 499h1v1h-1zM339 500h1v1h-1zM343 501h1v1h-1zM339 502h1v1h-1zM343 502h1v1h-1zM340 503h1v1h-1zM341 503h1v1h-1zM342 503h1v1h-1zM375 497h1v1h-1zM375 498h1v1h-1zM375 499h1v1h-1zM375 500h1v1h-1zM371 501h1v1h-1zM372 501h1v1h-1zM373 501h1v1h-1zM374 501h1v1h-1zM375 501h1v1h-1zM376 501h1v1h-1zM375 502h1v1h-1zM375 503h1v1h-1zM406 497h1v1h-1zM406 498h1v1h-1zM406 499h1v1h-1zM406 500h1v1h-1zM402 501h1v1h-1zM403 501h1v1h-1zM404 501h1v1h-1zM405 501h1v1h-1zM406 501h1v1h-1zM407 501h1v1h-1zM406 502h1v1h-1zM406 503h1v1h-1zM409 503h1v1h-1zM412 497h1v1h-1zM413 497h1v1h-1zM414 497h1v1h-1zM415 497h1v1h-1zM413 499h1v1h-1zM411 500h1v1h-1zM415 501h1v1h-1zM411 502h1v1h-1zM415 502h1v1h-1zM412 503h1v1h-1zM413 503h1v1h-1zM414 503h1v1h-1zM445 497h1v1h-1zM446 497h1v1h-1zM447 497h1v1h-1zM448 497h1v1h-1zM446 499h1v1h-1zM444 500h1v1h-1zM448 501h1v1h-1zM444 502h1v1h-1zM448 502h1v1h-1zM445 503h1v1h-1zM446 503h1v1h-1zM447 503h1v1h-1zM477 497h1v1h-1zM478 497h1v1h-1zM479 497h1v1h-1zM480 497h1v1h-1zM478 499h1v1h-1zM476 500h1v1h-1zM480 501h1v1h-1zM476 502h1v1h-1zM480 502h1v1h-1zM477 503h1v1h-1zM478 503h1v1h-1zM479 503h1v1h-1zM483 503h1v1h-1zM486 497h1v1h-1zM487 497h1v1h-1zM488 497h1v1h-1zM489 497h1v1h-1zM487 499h1v1h-1zM485 500h1v1h-1zM489 501h1v1h-1zM485 502h1v1h-1zM489 502h1v1h-1zM486 503h1v1h-1zM487 503h1v1h-1zM488 503h1v1h-1zM518 497h1v1h-1zM519 497h1v1h-1zM520 497h1v1h-1zM517 498h1v1h-1zM517 499h1v1h-1zM519 499h1v1h-1zM520 499h1v1h-1zM517 500h1v1h-1zM521 500h1v1h-1zM517 501h1v1h-1zM521 501h1v1h-1zM517 502h1v1h-1zM521 502h1v1h-1zM518 503h1v1h-1zM519 503h1v1h-1zM520 503h1v1h-1z"/></g>
<clipPath id="cl"><rect x="82" y="156" width="458" height="331"/></clipPath>
<g clip-path="url(#cl)"><path d="M78 321.5h9M82.5 317v9M85 313.5h9M89.5 309v9M92 305.5h9M96.5 301v9M100 297.5h9M104.5 293v9M107 289.5h9M111.5 285v9M114 281.5h9M118.5 277v9M121 274.5h9M125.5 270v9M129 268.5h9M133.5 264v9M136 262.5h9M140.5 258v9M143 256.5h9M147.5 252v9M151 251.5h9M155.5 247v9M158 247.5h9M162.5 243v9M165 244.5h9M169.5 240v9M172 241.5h9M176.5 237v9M180 240.5h9M184.5 236v9M187 239.5h9M191.5 235v9M194 238.5h9M198.5 234v9M202 239.5h9M206.5 235v9M209 240.5h9M213.5 236v9M216 243.5h9M220.5 239v9M223 246.5h9M227.5 242v9M231 250.5h9M235.5 246v9M238 254.5h9M242.5 250v9M245 259.5h9M249.5 255v9M253 265.5h9M257.5 261v9M260 272.5h9M264.5 268v9M267 278.5h9M271.5 274v9M274 286.5h9M278.5 282v9M282 293.5h9M286.5 289v9M289 301.5h9M293.5 297v9M296 309.5h9M300.5 305v9M303 318.5h9M307.5 314v9M311 326.5h9M315.5 322v9M318 334.5h9M322.5 330v9M325 342.5h9M329.5 338v9M333 350.5h9M337.5 346v9M340 358.5h9M344.5 354v9M347 365.5h9M351.5 361v9M354 372.5h9M358.5 368v9M362 378.5h9M366.5 374v9M369 384.5h9M373.5 380v9M376 389.5h9M380.5 385v9M384 393.5h9M388.5 389v9M391 397.5h9M395.5 393v9M398 400.5h9M402.5 396v9M405 402.5h9M409.5 398v9M413 403.5h9M417.5 399v9M420 404.5h9M424.5 400v9M427 403.5h9M431.5 399v9M435 402.5h9M439.5 398v9M442 400.5h9M446.5 396v9M449 398.5h9M453.5 394v9M456 394.5h9M460.5 390v9M464 390.5h9M468.5 386v9M471 385.5h9M475.5 381v9M478 379.5h9M482.5 375v9M485 373.5h9M489.5 369v9M493 367.5h9M497.5 363v9M500 359.5h9M504.5 355v9M507 352.5h9M511.5 348v9M515 344.5h9M519.5 340v9M522 336.5h9M526.5 332v9M529 328.5h9M533.5 324v9" stroke="#000" stroke-width="1" fill="none"/>
<path d="M77.2 316.2l10.6 10.6M77.2 326.8l10.6 -10.6M84.2 300.2l10.6 10.6M84.2 310.8l10.6 -10.6M91.2 284.2l10.6 10.6M91.2 294.8l10.6 -10.6M99.2 269.2l10.6 10.6M99.2 279.8l10.6 -10.6M106.2 257.2l10.6 10.6M106.2 267.8l10.6 -10.6M113.2 246.2l10.6 10.6M113.2 256.8l10.6 -10.6M120.2 239.2l10.6 10.6M120.2 249.8l10.6 -10.6M128.2 235.2l10.6 10.6M128.2 245.8l10.6 -10.6M135.2 233.2l10.6 10.6M135.2 243.8l10.6 -10.6M142.2 235.2l10.6 10.6M142.2 245.8l10.6 -10.6M150.2 241.2l10.6 10.6M150.2 251.8l10.6 -10.6M157.2 249.2l10.6 10.6M157.2 259.8l10.6 -10.6M164.2 260.2l10.6 10.6M164.2 270.8l10.6 -10.6M171.2 273.2l10.6 10.6M171.2 283.8l10.6 -10.6M179.2 288.2l10.6 10.6M179.2 298.8l10.6 -10.6M186.2 304.2l10.6 10.6M186.2 314.8l10.6 -10.6M193.2 321.2l10.6 10.6M193.2 331.8l10.6 -10.6M201.2 337.2l10.6 10.6M201.2 347.8l10.6 -10.6M208.2 353.2l10.6 10.6M208.2 363.8l10.6 -10.6M215.2 367.2l10.6 10.6M215.2 377.8l10.6 -10.6M222.2 379.2l10.6 10.6M222.2 389.8l10.6 -10.6M230.2 388.2l10.6 10.6M230.2 398.8l10.6 -10.6M237.2 395.2l10.6 10.6M237.2 405.8l10.6 -10.6M244.2 398.2l10.6 10.6M244.2 408.8l10.6 -10.6M252.2 398.2l10.6 10.6M252.2 408.8l10.6 -10.6M259.2 395.2l10.6 10.6M259.2 405.8l10.6 -10.6M266.2 389.2l10.6 10.6M266.2 399.8l10.6 -10.6M273.2 380.2l10.6 10.6M273.2 390.8l10.6 -10.6M281.2 368.2l10.6 10.6M281.2 378.8l10.6 -10.6M288.2 354.2l10.6 10.6M288.2 364.8l10.6 -10.6M295.2 339.2l10.6 10.6M295.2 349.8l10.6 -10.6M302.2 323.2l10.6 10.6M302.2 333.8l10.6 -10.6M310.2 306.2l10.6 10.6M310.2 316.8l10.6 -10.6M317.2 290.2l10.6 10.6M317.2 300.8l10.6 -10.6M324.2 275.2l10.6 10.6M324.2 285.8l10.6 -10.6M332.2 262.2l10.6 10.6M332.2 272.8l10.6 -10.6M339.2 250.2l10.6 10.6M339.2 260.8l10.6 -10.6M346.2 242.2l10.6 10.6M346.2 252.8l10.6 -10.6M353.2 236.2l10.6 10.6M353.2 246.8l10.6 -10.6M361.2 233.2l10.6 10.6M361.2 243.8l10.6 -10.6M368.2 234.2l10.6 10.6M368.2 244.8l10.6 -10.6M375.2 238.2l10.6 10.6M375.2 248.8l10.6 -10.6M383.2 245.2l10.6 10.6M383.2 255.8l10.6 -10.6M390.2 255.2l10.6 10.6M390.2 265.8l10.6 -10.6M397.2 268.2l10.6 10.6M397.2 278.8l10.6 -10.6M404.2 282.2l10.6 10.6M404.2 292.8l10.6 -10.6M412.2 298.2l10.6 10.6M412.2 308.8l10.6 -10.6M419.2 314.2l10.6 10.6M419.2 324.8l10.6 -10.6M426.2 330.2l10.6 10.6M426.2 340.8l10.6 -10.6M434.2 346.2l10.6 10.6M434.2 356.8l10.6 -10.6M441.2 361.2l10.6 10.6M441.2 371.8l10.6 -10.6M448.2 374.2l10.6 10.6M448.2 384.8l10.6 -10.6M455.2 384.2l10.6 10.6M455.2 394.8l10.6 -10.6M463.2 392.2l10.6 10.6M463.2 402.8l10.6 -10.6M470.2 397.2l10.6 10.6M470.2 407.8l10.6 -10.6M477.2 399.2l10.6 10.6M477.2 409.8l10.6 -10.6M484.2 397.2l10.6 10.6M484.2 407.8l10.6 -10.6M492.2 392.2l10.6 10.6M492.2 402.8l10.6 -10.6M499.2 384.2l10.6 10.6M499.2 394.8l10.6 -10.6M506.2 373.2l10.6 10.6M506.2 383.8l10.6 -10.6M514.2 360.2l10.6 10.6M514.2 370.8l10.6 -10.6M521.2 346.2l10.6 10.6M521.2 356.8l10.6 -10.6M528.2 330.2l10.6 10.6M528.2 340.8l10.6 -10.6" stroke="#000" stroke-width="1.15" fill="none" shape-rendering="geometricPrecision"/></g>
</svg>
</body></html>
